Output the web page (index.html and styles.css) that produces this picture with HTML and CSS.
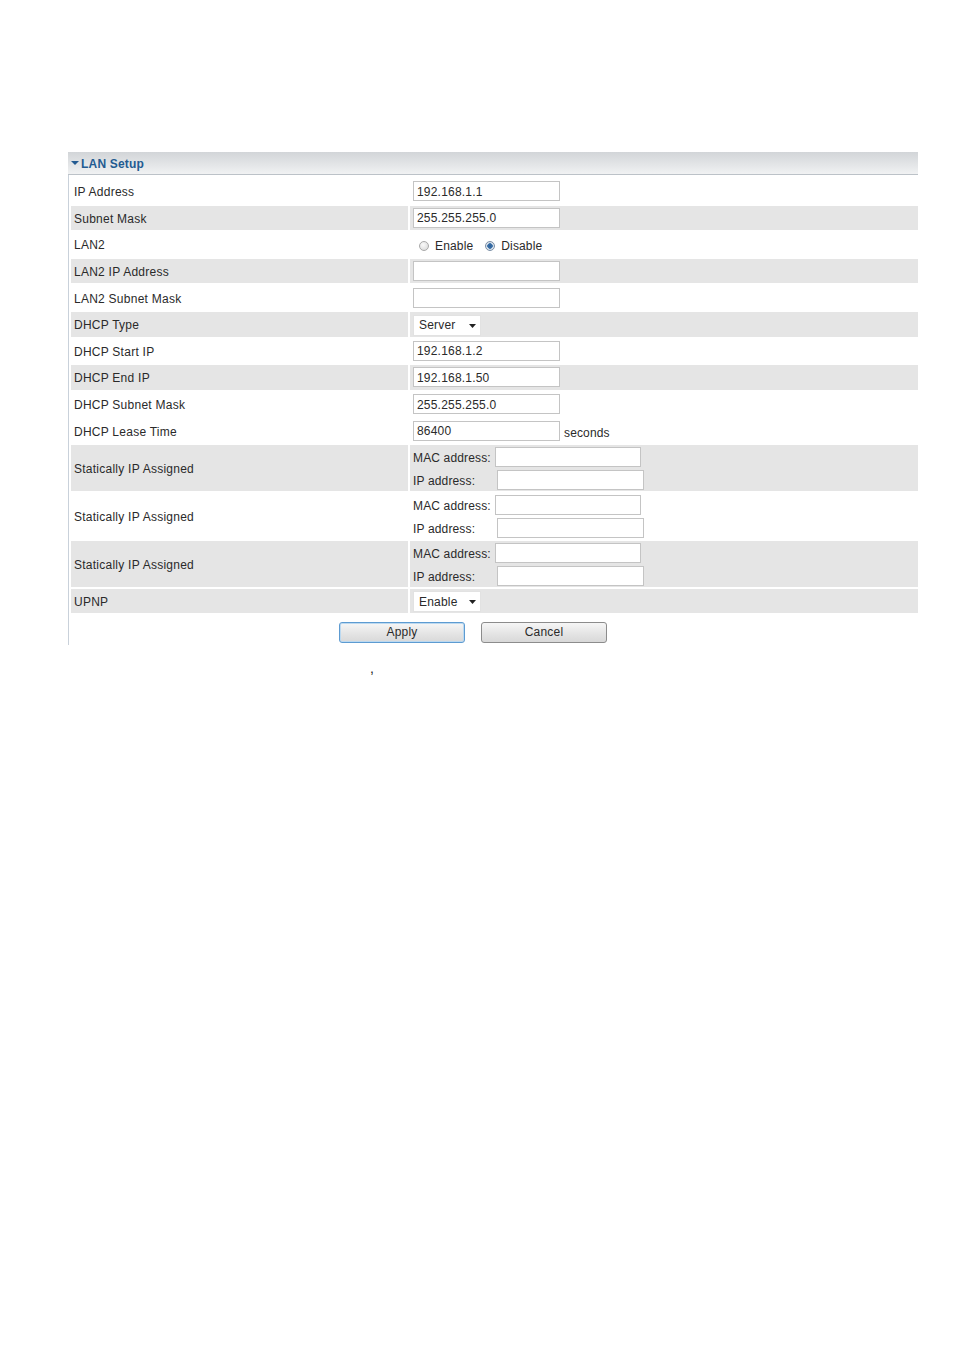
FILE: index.html
```html
<!DOCTYPE html>
<html lang="en">
<head>
  <meta charset="UTF-8" />
  <title>LAN Setup</title>
  <link rel="stylesheet" href="styles.css">
</head>
<body>
  <div class="page">
    <div class="panel">
      <div class="panel-head">
        <span class="caret"></span>LAN Setup
      </div>

      <div class="rows">
        <div class="form-row">
          <div class="cell label">IP Address</div>
          <div class="cell value"><input class="text" type="text" value="192.168.1.1"></div>
        </div>
        <div class="form-row alt">
          <div class="cell label">Subnet Mask</div>
          <div class="cell value"><input class="text" type="text" value="255.255.255.0"></div>
        </div>
        <div class="form-row">
          <div class="cell label">LAN2</div>
          <div class="cell value radios">
            <label><input class="radio" type="radio" name="lan2"> Enable</label>
            <label><input class="radio" type="radio" name="lan2" checked> Disable</label>
          </div>
        </div>
        <div class="form-row alt">
          <div class="cell label">LAN2 IP Address</div>
          <div class="cell value"><input class="text" type="text"></div>
        </div>
        <div class="form-row">
          <div class="cell label">LAN2 Subnet Mask</div>
          <div class="cell value"><input class="text" type="text"></div>
        </div>
        <div class="form-row alt">
          <div class="cell label">DHCP Type</div>
          <div class="cell value">
            <span class="select-wrap">
              <select class="select"><option>Server</option><option>Relay</option><option>None</option></select>
              <svg class="arrow" width="7" height="4" viewBox="0 0 7 4"><path d="M0 0H7L3.5 4Z" fill="#222"/></svg>
            </span>
          </div>
        </div>
        <div class="form-row">
          <div class="cell label">DHCP Start IP</div>
          <div class="cell value"><input class="text" type="text" value="192.168.1.2"></div>
        </div>
        <div class="form-row alt">
          <div class="cell label">DHCP End IP</div>
          <div class="cell value"><input class="text" type="text" value="192.168.1.50"></div>
        </div>
        <div class="form-row">
          <div class="cell label">DHCP Subnet Mask</div>
          <div class="cell value"><input class="text" type="text" value="255.255.255.0"></div>
        </div>
        <div class="form-row">
          <div class="cell label">DHCP Lease Time</div>
          <div class="cell value"><input class="text" type="text" value="86400"><span class="unit">seconds</span></div>
        </div>

        <div class="form-row static alt">
          <div class="cell label">Statically IP Assigned</div>
          <div class="cell value pair">
            <span>MAC address:</span><input class="text mac" type="text">
            <span>IP address:</span><input class="text ip" type="text">
          </div>
        </div>
        <div class="form-row static">
          <div class="cell label">Statically IP Assigned</div>
          <div class="cell value pair">
            <span>MAC address:</span><input class="text mac" type="text">
            <span>IP address:</span><input class="text ip" type="text">
          </div>
        </div>
        <div class="form-row static alt">
          <div class="cell label">Statically IP Assigned</div>
          <div class="cell value pair">
            <span>MAC address:</span><input class="text mac" type="text">
            <span>IP address:</span><input class="text ip" type="text">
          </div>
        </div>

        <div class="form-row alt upnp">
          <div class="cell label">UPNP</div>
          <div class="cell value">
            <span class="select-wrap">
              <select class="select"><option>Enable</option><option>Disable</option></select>
              <svg class="arrow" width="7" height="4" viewBox="0 0 7 4"><path d="M0 0H7L3.5 4Z" fill="#222"/></svg>
            </span>
          </div>
        </div>
      </div>

      <div class="buttons">
        <button class="btn btn-apply" type="button">Apply</button>
        <button class="btn" type="button">Cancel</button>
      </div>
    </div>
    <p class="note">,</p>
  </div>
</body>
</html>
```

FILE: styles.css
```css
body {
  margin: 0;
  background: #fff;
  font-family: "Liberation Sans", Arial, sans-serif;
  font-size: 12px;
  color: #2a2a2a;
}

.page {
  padding: 152px 0 0 68px;
  width: 850px;
}

.panel {
  border-left: 1px solid #c9d1da;
  height: 493px;
  box-sizing: border-box;
}

.panel-head {
  height: 23px;
  margin-left: -1px;
  border-bottom: 1px solid #bcc2c8;
  background: linear-gradient(to bottom, #d2d5d8, #e4e6e8 60%, #f1f2f3);
  display: flex;
  align-items: center;
  padding: 2px 0 0 3px;
  box-sizing: border-box;
  font-weight: bold;
  color: #235b92;
  letter-spacing: 0.2px;
}

.caret {
  width: 0;
  height: 0;
  border-left: 4px solid transparent;
  border-right: 4px solid transparent;
  border-top: 4px solid #235b92;
  margin-right: 2px;
  margin-top: -3px;
}

.rows {
  display: flex;
  flex-direction: column;
  gap: 2px;
  padding: 4px 0 0 2px;
}

.form-row {
  display: grid;
  grid-template-columns: 337px 1fr;
  column-gap: 2px;
  height: 24.6px;
}

.form-row.static {
  height: 46px;
}

.form-row.upnp {
  height: 24px;
}

.cell {
  display: flex;
  align-items: center;
}

.label {
  padding: 2px 0 0 3px;
  letter-spacing: 0.25px;
}

.value {
  padding-left: 3px;
  letter-spacing: 0.15px;
}

.alt .cell {
  background: #e5e5e5;
}

.text {
  box-sizing: border-box;
  width: 147px;
  height: 20px;
  margin: 0;
  padding: 1px 3px 0;
  border: 1px solid #c4c4c4;
  background: #fff;
  font-family: "Liberation Sans", Arial, sans-serif;
  font-size: 12px;
  letter-spacing: 0.2px;
  color: #2a2a2a;
  outline: none;
}

.unit {
  margin-left: 4px;
  margin-top: 4px;
}

.radios {
  gap: 12px;
  padding-left: 9px;
  padding-top: 4px;
}

.radios label {
  display: flex;
  align-items: center;
  gap: 6px;
}

.radio {
  appearance: none;
  width: 10px;
  height: 10px;
  margin: 0;
  border-radius: 50%;
  border: 1px solid #a9a9a9;
  background: radial-gradient(circle at 40% 35%, #fafafa, #d6d6d6);
  box-sizing: border-box;
}

.radio:checked {
  border-color: #7b8fa6;
  background: radial-gradient(circle, #2d5d92 0, #3d74ad 2.5px, #dfe6ee 3px, #c8d2dc 100%);
}

.select-wrap {
  position: relative;
  display: inline-block;
  margin-top: 2px;
}

.select {
  appearance: none;
  width: 68px;
  height: 21px;
  margin: 0;
  padding: 0 0 0 5px;
  border: 1px solid #e2e2e2;
  border-radius: 0;
  background: #fff;
  font-family: "Liberation Sans", Arial, sans-serif;
  font-size: 12px;
  letter-spacing: 0.2px;
  color: #2a2a2a;
}

.arrow {
  position: absolute;
  right: 5px;
  top: 9px;
  pointer-events: none;
}

.pair {
  display: grid;
  grid-template-columns: 82px 1fr;
  align-content: start;
  align-items: center;
  row-gap: 3px;
  padding-top: 2px;
}

.pair span {
  padding-top: 3px;
}

.text.mac {
  width: 146px;
}

.text.ip {
  margin-left: 2px;
}

.buttons {
  display: flex;
  gap: 16px;
  padding: 9px 0 0 270px;
}

.btn {
  width: 126px;
  height: 21px;
  padding: 0;
  border: 1px solid #8c8c8c;
  border-radius: 3px;
  background: linear-gradient(to bottom, #f6f6f6, #e6e6e6 50%, #d8d8d8);
  font-family: "Liberation Sans", Arial, sans-serif;
  font-size: 12px;
  letter-spacing: 0.2px;
  color: #2a2a2a;
}

.btn-apply {
  border-color: #5d9bd1;
  box-shadow: inset 0 0 0 1px #bcd9f0;
}

.note {
  margin: 16px 0 0 302px;
  font-size: 14px;
  line-height: 14px;
  color: #222;
}
```
